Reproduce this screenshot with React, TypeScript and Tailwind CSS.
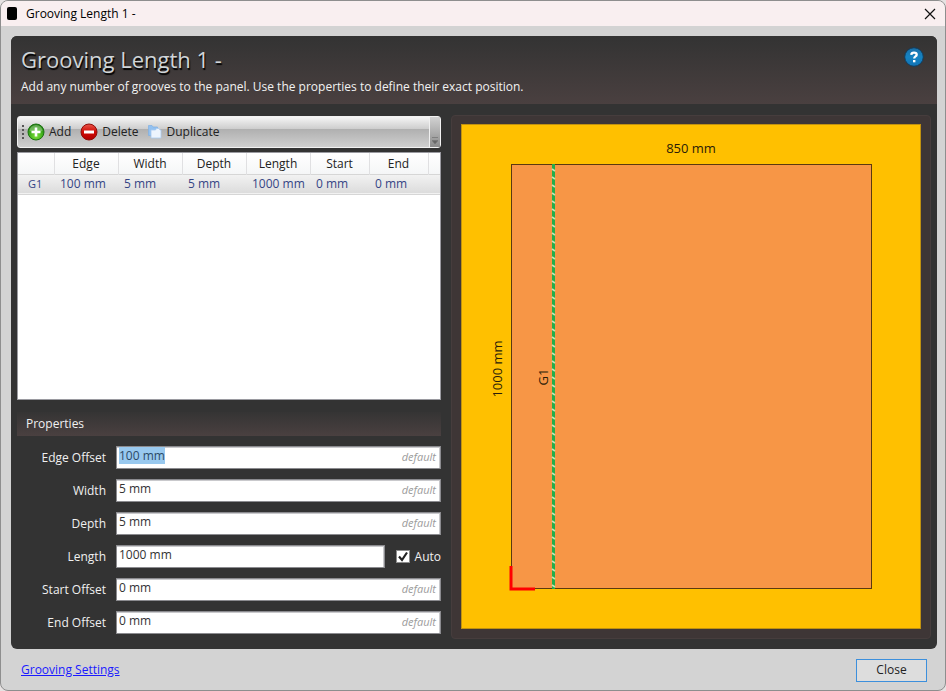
import { useEffect, useRef } from 'react';

const columns = ['Edge', 'Width', 'Depth', 'Length', 'Start', 'End'];
const grooves = [{ name: 'G1', values: ['100 mm', '5 mm', '5 mm', '1000 mm', '0 mm', '0 mm'] }];

const fields = [
  { id: 'edge-offset', label: 'Edge Offset', value: '100 mm' },
  { id: 'width', label: 'Width', value: '5 mm' },
  { id: 'depth', label: 'Depth', value: '5 mm' },
  { id: 'length', label: 'Length', value: '1000 mm', auto: true },
  { id: 'start-offset', label: 'Start Offset', value: '0 mm' },
  { id: 'end-offset', label: 'End Offset', value: '0 mm' },
];

function AddIcon() {
  return (
    <svg width="18" height="18" viewBox="0 0 18 18" aria-hidden="true">
      <defs>
        <radialGradient id="add" cx="0.5" cy="0.75" r="0.75">
          <stop offset="0" stopColor="#7fe03a" />
          <stop offset="0.55" stopColor="#3fae1c" />
          <stop offset="1" stopColor="#1f7a10" />
        </radialGradient>
      </defs>
      <circle cx="9" cy="9" r="8" fill="url(#add)" stroke="#1c7212" />
      <path d="M2.500 8a6.500 6 0 0 1 13 0q-6.500 2-13 0z" fill="#fff" opacity=".28" />
      <path d="M9 4.500v9M4.500 9h9" stroke="#fff" strokeWidth="2.600" />
    </svg>
  );
}

function DeleteIcon() {
  return (
    <svg width="18" height="18" viewBox="0 0 18 18" aria-hidden="true">
      <defs>
        <linearGradient id="del" x1="0" y1="0" x2="0" y2="1">
          <stop offset="0" stopColor="#e8564a" />
          <stop offset="0.5" stopColor="#cf0a05" />
          <stop offset="1" stopColor="#b00000" />
        </linearGradient>
      </defs>
      <circle cx="9" cy="9" r="8" fill="url(#del)" stroke="#8e0e0a" />
      <rect x="4" y="7.500" width="10" height="3" fill="#fff" />
    </svg>
  );
}

function DuplicateIcon() {
  return (
    <svg width="16" height="16" viewBox="0 0 16 16" aria-hidden="true">
      <path d="M1.500 1.500h3.500l1 1.500h4.500v8.500h-9z" fill="#93c1f0" stroke="#7fb0e4" strokeWidth=".7" />
      <path d="M4 6h4.500l1-1.500h2.500l1 1.500h1v8h-10z" fill="#edf4fd" stroke="#a9cbf0" strokeWidth=".8" />
    </svg>
  );
}

function HelpIcon() {
  return (
    <svg width="20" height="20" viewBox="0 0 20 20" aria-hidden="true">
      <defs>
        <linearGradient id="help" x1="0" y1="0" x2="0" y2="1">
          <stop offset="0" stopColor="#1a6fa8" />
          <stop offset="0.5" stopColor="#1583c2" />
          <stop offset="1" stopColor="#1272b4" />
        </linearGradient>
      </defs>
      <circle cx="10" cy="10" r="9.300" fill="url(#help)" stroke="#123c5c" />
      <path
        d="M7.300 7.900C7.400 6.300 8.500 5.700 10 5.700c1.600 0 2.700.7 2.700 2 0 1.800-2.500 1.700-2.500 3.800"
        fill="none"
        stroke="#fff"
        strokeWidth="2.300"
      />
      <rect x="9" y="13" width="2.400" height="2.300" fill="#fff" />
    </svg>
  );
}

function PanelDrawing() {
  return (
    <svg
      viewBox="0 0 460 505"
      className="block h-auto w-full bg-[#ffc000] text-[13px]"
      role="img"
      aria-label="Panel with groove G1"
    >
      <rect x=".5" y=".5" width="459" height="504" fill="none" stroke="#c09110" />
      <rect x="50.500" y="40.500" width="360" height="424" fill="#f79646" stroke="#5c3a10" />
      <path d="M92.500 40v425" stroke="#25ad4b" strokeWidth="3" />
      <path
        d="M91 45l3 2M91 53l3 2M91 61l3 2M91 69l3 2M91 77l3 2M91 85l3 2M91 93l3 2M91 101l3 2M91 109l3 2M91 117l3 2M91 125l3 2M91 133l3 2M91 141l3 2M91 149l3 2M91 157l3 2M91 165l3 2M91 173l3 2M91 181l3 2M91 189l3 2M91 197l3 2M91 205l3 2M91 213l3 2M91 221l3 2M91 229l3 2M91 237l3 2M91 245l3 2M91 253l3 2M91 261l3 2M91 269l3 2M91 277l3 2M91 285l3 2M91 293l3 2M91 301l3 2M91 309l3 2M91 317l3 2M91 325l3 2M91 333l3 2M91 341l3 2M91 349l3 2M91 357l3 2M91 365l3 2M91 373l3 2M91 381l3 2M91 389l3 2M91 397l3 2M91 405l3 2M91 413l3 2M91 421l3 2M91 429l3 2M91 437l3 2M91 445l3 2M91 453l3 2M91 461l3 2"
        stroke="#c9e3b4"
        strokeWidth="1.600"
      />
      <path d="M50 442v23h24" fill="none" stroke="#f00" strokeWidth="3" />
      <g fill="#2a1c08" textAnchor="middle">
        <text x="230" y="29">850 mm</text>
        <text transform="translate(41 245) rotate(-90)">1000 mm</text>
        <text transform="translate(87 253) rotate(-90)">
          G1
        </text>
      </g>
    </svg>
  );
}

const inputClass =
  'h-[23px] w-full border border-[#8b8b8f] bg-white pb-1 pl-[2px] text-[#333] shadow-[inset_-1px_1px_0_#c9c9cc] outline-none selection:bg-[#99c9ef] selection:text-[#2b4a68]';

export default function App() {
  const first = useRef<HTMLInputElement>(null);
  useEffect(() => {
    first.current?.focus();
    first.current?.select();
  }, []);

  return (
    <div className="min-h-screen bg-[#e6e2e2] font-['Open_Sans','Noto_Sans',sans-serif] text-[12px] leading-4 text-[#222]">
      <div className="flex min-h-screen flex-col overflow-hidden rounded-lg border border-[#8e8e8e] bg-[#d3d3d3]">
        <div className="flex h-[25px] items-center justify-between bg-[#f9eff0] pr-[5px] pl-[6px] text-black">
          <div className="flex items-center gap-[9px]">
            <span className="h-[13px] w-[10px] rounded-xs bg-black" />
            <span>Grooving Length 1 -</span>
          </div>
          <button aria-label="Close window" className="p-1">
            <svg width="12" height="12" viewBox="0 0 12 12">
              <path d="M1 1l10 10M11 1L1 11" stroke="#111" strokeWidth="1.200" />
            </svg>
          </button>
        </div>

        <main className="mt-[10px] mr-2 ml-[10px] flex flex-1 flex-col overflow-hidden rounded-md bg-[#333]">
          <header className="flex h-[68px] items-start justify-between bg-linear-to-b from-[#333] to-[#4a4040] pt-[11px] pr-[13px] pl-[10px]">
            <div>
              <h1 className="text-[22px] leading-6 text-[#d0d5d8] [text-shadow:1px_2px_1px_#000]">
                Grooving Length 1 -
              </h1>
              <p className="mt-2 text-[#f2f2f2]">
                Add any number of grooves to the panel. Use the properties to define their exact position.
              </p>
            </div>
            <button aria-label="Help">
              <HelpIcon />
            </button>
          </header>

          <div className="flex flex-1 gap-[10px] px-[6px] pt-[11px] pb-[10px]">
            <div className="flex w-[424px] shrink-0 flex-col pt-px">
              <div className="flex h-8 rounded-[3px] border border-[#f2f2f2] bg-[linear-gradient(#f5f5f5,#cdcdcd_40%,#b0b0b0_41%,#cfcfcf)]">
                <div className="flex flex-1 items-center">
                  <span className="mr-[3px] ml-1 h-[14px] w-[2px] bg-[repeating-linear-gradient(#555_0_2px,transparent_2px_4px)]" />
                  <button className="flex items-center gap-1">
                    <AddIcon />
                    Add
                  </button>
                  <button className="ml-[9px] flex items-center gap-1">
                    <DeleteIcon />
                    Delete
                  </button>
                  <button className="ml-2 flex items-center gap-1">
                    <DuplicateIcon />
                    Duplicate
                  </button>
                </div>
                <button
                  aria-label="Toolbar options"
                  className="flex w-[11px] items-end justify-center border-l border-[#f0f0f0] bg-linear-to-b from-[#d2d2d2] to-[#8c8c8c] pb-[2px]"
                >
                  <svg width="6" height="8" viewBox="0 0 6 8">
                    <path d="M0 .5h6M0 3.500h6L3 7z" fill="#666" stroke="#777" strokeWidth=".8" />
                  </svg>
                </button>
              </div>

              <div className="mt-1 min-h-[247px] flex-1 border border-[#9a9aa0] bg-white">
                <table className="w-full table-fixed border-collapse">
                  <colgroup>
                    <col className="w-9" />
                    <col className="w-16" />
                    <col className="w-16" />
                    <col className="w-16" />
                    <col className="w-16" />
                    <col className="w-[59px]" />
                    <col className="w-[59px]" />
                    <col />
                  </colgroup>
                  <thead>
                    <tr className="h-[21px] bg-linear-to-b from-white to-[#f5f6f7]">
                      <td className="border-r border-[#e0e0e2]" />
                      {columns.map((c) => (
                        <th key={c} scope="col" className="border-r border-[#e0e0e2] p-0 pt-px font-normal">
                          {c}
                        </th>
                      ))}
                      <td />
                    </tr>
                  </thead>
                  <tbody>
                    {grooves.map((g) => (
                      <tr
                        key={g.name}
                        className="h-5 border-y border-[#d6d6d6] bg-linear-to-b from-[#f2f2f2] to-[#dcdcdc] text-[#354585]"
                      >
                        <th scope="row" className="p-0 pl-[10px] text-left text-[11px] font-normal">
                          {g.name}
                        </th>
                        {g.values.map((v, i) => (
                          <td key={i} className="p-0 pl-[6px] whitespace-nowrap">
                            {v}
                          </td>
                        ))}
                        <td />
                      </tr>
                    ))}
                  </tbody>
                </table>
              </div>

              <h2 className="mt-3 flex h-6 items-center bg-linear-to-b from-[#353434] to-[#4a4040] pl-[9px] text-[#f0f0f0]">
                Properties
              </h2>

              <div className="mt-[10px] mb-[5px] flex flex-col gap-[10px]">
                {fields.map((f, i) => (
                  <div key={f.id} className="flex h-[23px] items-center">
                    <label htmlFor={f.id} className="w-[99px] shrink-0 pr-[10px] text-right text-[#f0f0f0]">
                      {f.label}
                    </label>
                    <div className="relative flex-1">
                      <input id={f.id} ref={i === 0 ? first : undefined} defaultValue={f.value} className={inputClass} />
                      {!f.auto && (
                        <span className="pointer-events-none absolute top-[3px] right-[5px] text-[11px] text-[#9c9c9c] italic">
                          default
                        </span>
                      )}
                    </div>
                    {f.auto && (
                      <label className="ml-[11px] flex items-center gap-[5px] text-[#f0f0f0]">
                        <span className="relative flex h-[13px] w-[14px]">
                          <input
                            type="checkbox"
                            defaultChecked
                            className="peer h-[13px] w-[14px] appearance-none border border-[#8c8c8c] bg-white"
                          />
                          <svg
                            viewBox="0 0 14 13"
                            className="pointer-events-none absolute inset-0 hidden peer-checked:block"
                          >
                            <path d="M3 6.500l3 3.500 5-7.500" fill="none" stroke="#222" strokeWidth="2.200" />
                          </svg>
                        </span>
                        Auto
                      </label>
                    )}
                  </div>
                ))}
              </div>
            </div>

            <section className="min-w-0 flex-1 rounded border border-[#463d3d] bg-[#3e3636] px-[9px] pt-2 pb-[9px]">
              <PanelDrawing />
            </section>
          </div>
        </main>

        <footer className="flex h-[41px] items-center justify-between pt-px pr-[18px] pl-5">
          <a href="#settings" className="text-[#1a1aff] underline">
            Grooving Settings
          </a>
          <button className="h-[23px] w-[71px] border border-[#3c8fdc] bg-[#dddddd]">Close</button>
        </footer>
      </div>
    </div>
  );
}
